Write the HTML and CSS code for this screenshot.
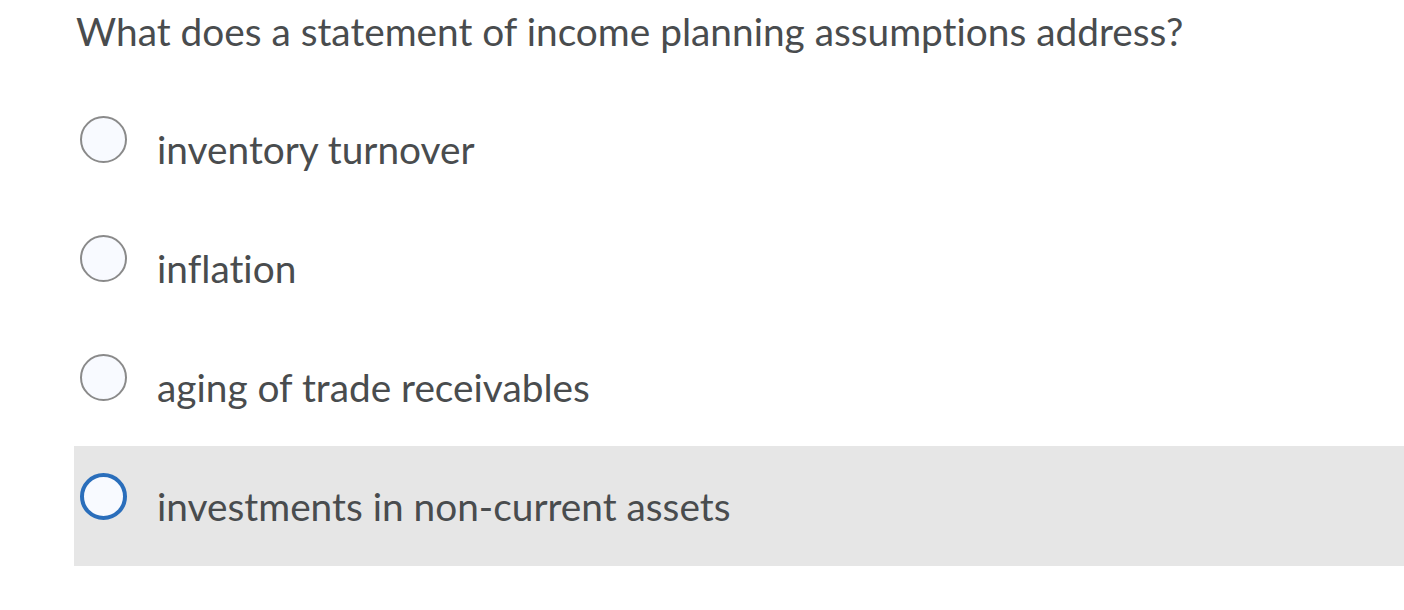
FILE: index.html
```html
<!DOCTYPE html>
<html>
<head>
<meta charset="utf-8">
<link rel="stylesheet" href="styles.css">
</head>
<body>
<div class="question">
  <h1 class="prompt">What does a statement of income planning assumptions address?</h1>
  <div class="options">
    <label class="option"><span class="radio"></span><span class="label">inventory turnover</span></label>
    <label class="option"><span class="radio"></span><span class="label">inflation</span></label>
    <label class="option"><span class="radio"></span><span class="label">aging of trade receivables</span></label>
    <label class="option option-hover"><span class="radio radio-focus"></span><span class="label">investments in non-current assets</span></label>
  </div>
</div>
</body>
</html>
```
FILE: styles.css
```css
html, body {
  margin: 0;
  padding: 0;
  background: #ffffff;
}
body {
  font-family: Lato, "Open Sans", sans-serif;
  color: #494c4e;
  font-variant-ligatures: none;
  font-feature-settings: "liga" 0, "dlig" 0;
}
.question {
  padding-left: 74px;
}
.prompt {
  box-sizing: border-box;
  margin: 0;
  padding-top: 9px;
  padding-left: 2px;
  font-weight: 400;
  font-size: 38.8px;
  line-height: 44px;
  height: 89px;
}
.options {
  display: flex;
  flex-direction: column;
}
.option {
  display: flex;
  align-items: flex-start;
  height: 119px;
}
.option-hover {
  background: #e6e6e6;
  height: 120px;
}
.radio {
  box-sizing: border-box;
  width: 47px;
  height: 47px;
  margin-left: 6px;
  margin-top: 27px;
  border-radius: 50%;
  border: 2px solid #8a8a8a;
  background: #f8faff;
  flex: none;
}
.radio-focus {
  border: 4px solid #2a6ebb;
}
.label {
  margin-left: 30px;
  font-size: 38.8px;
  line-height: 44px;
  margin-top: 38px;
}
```
